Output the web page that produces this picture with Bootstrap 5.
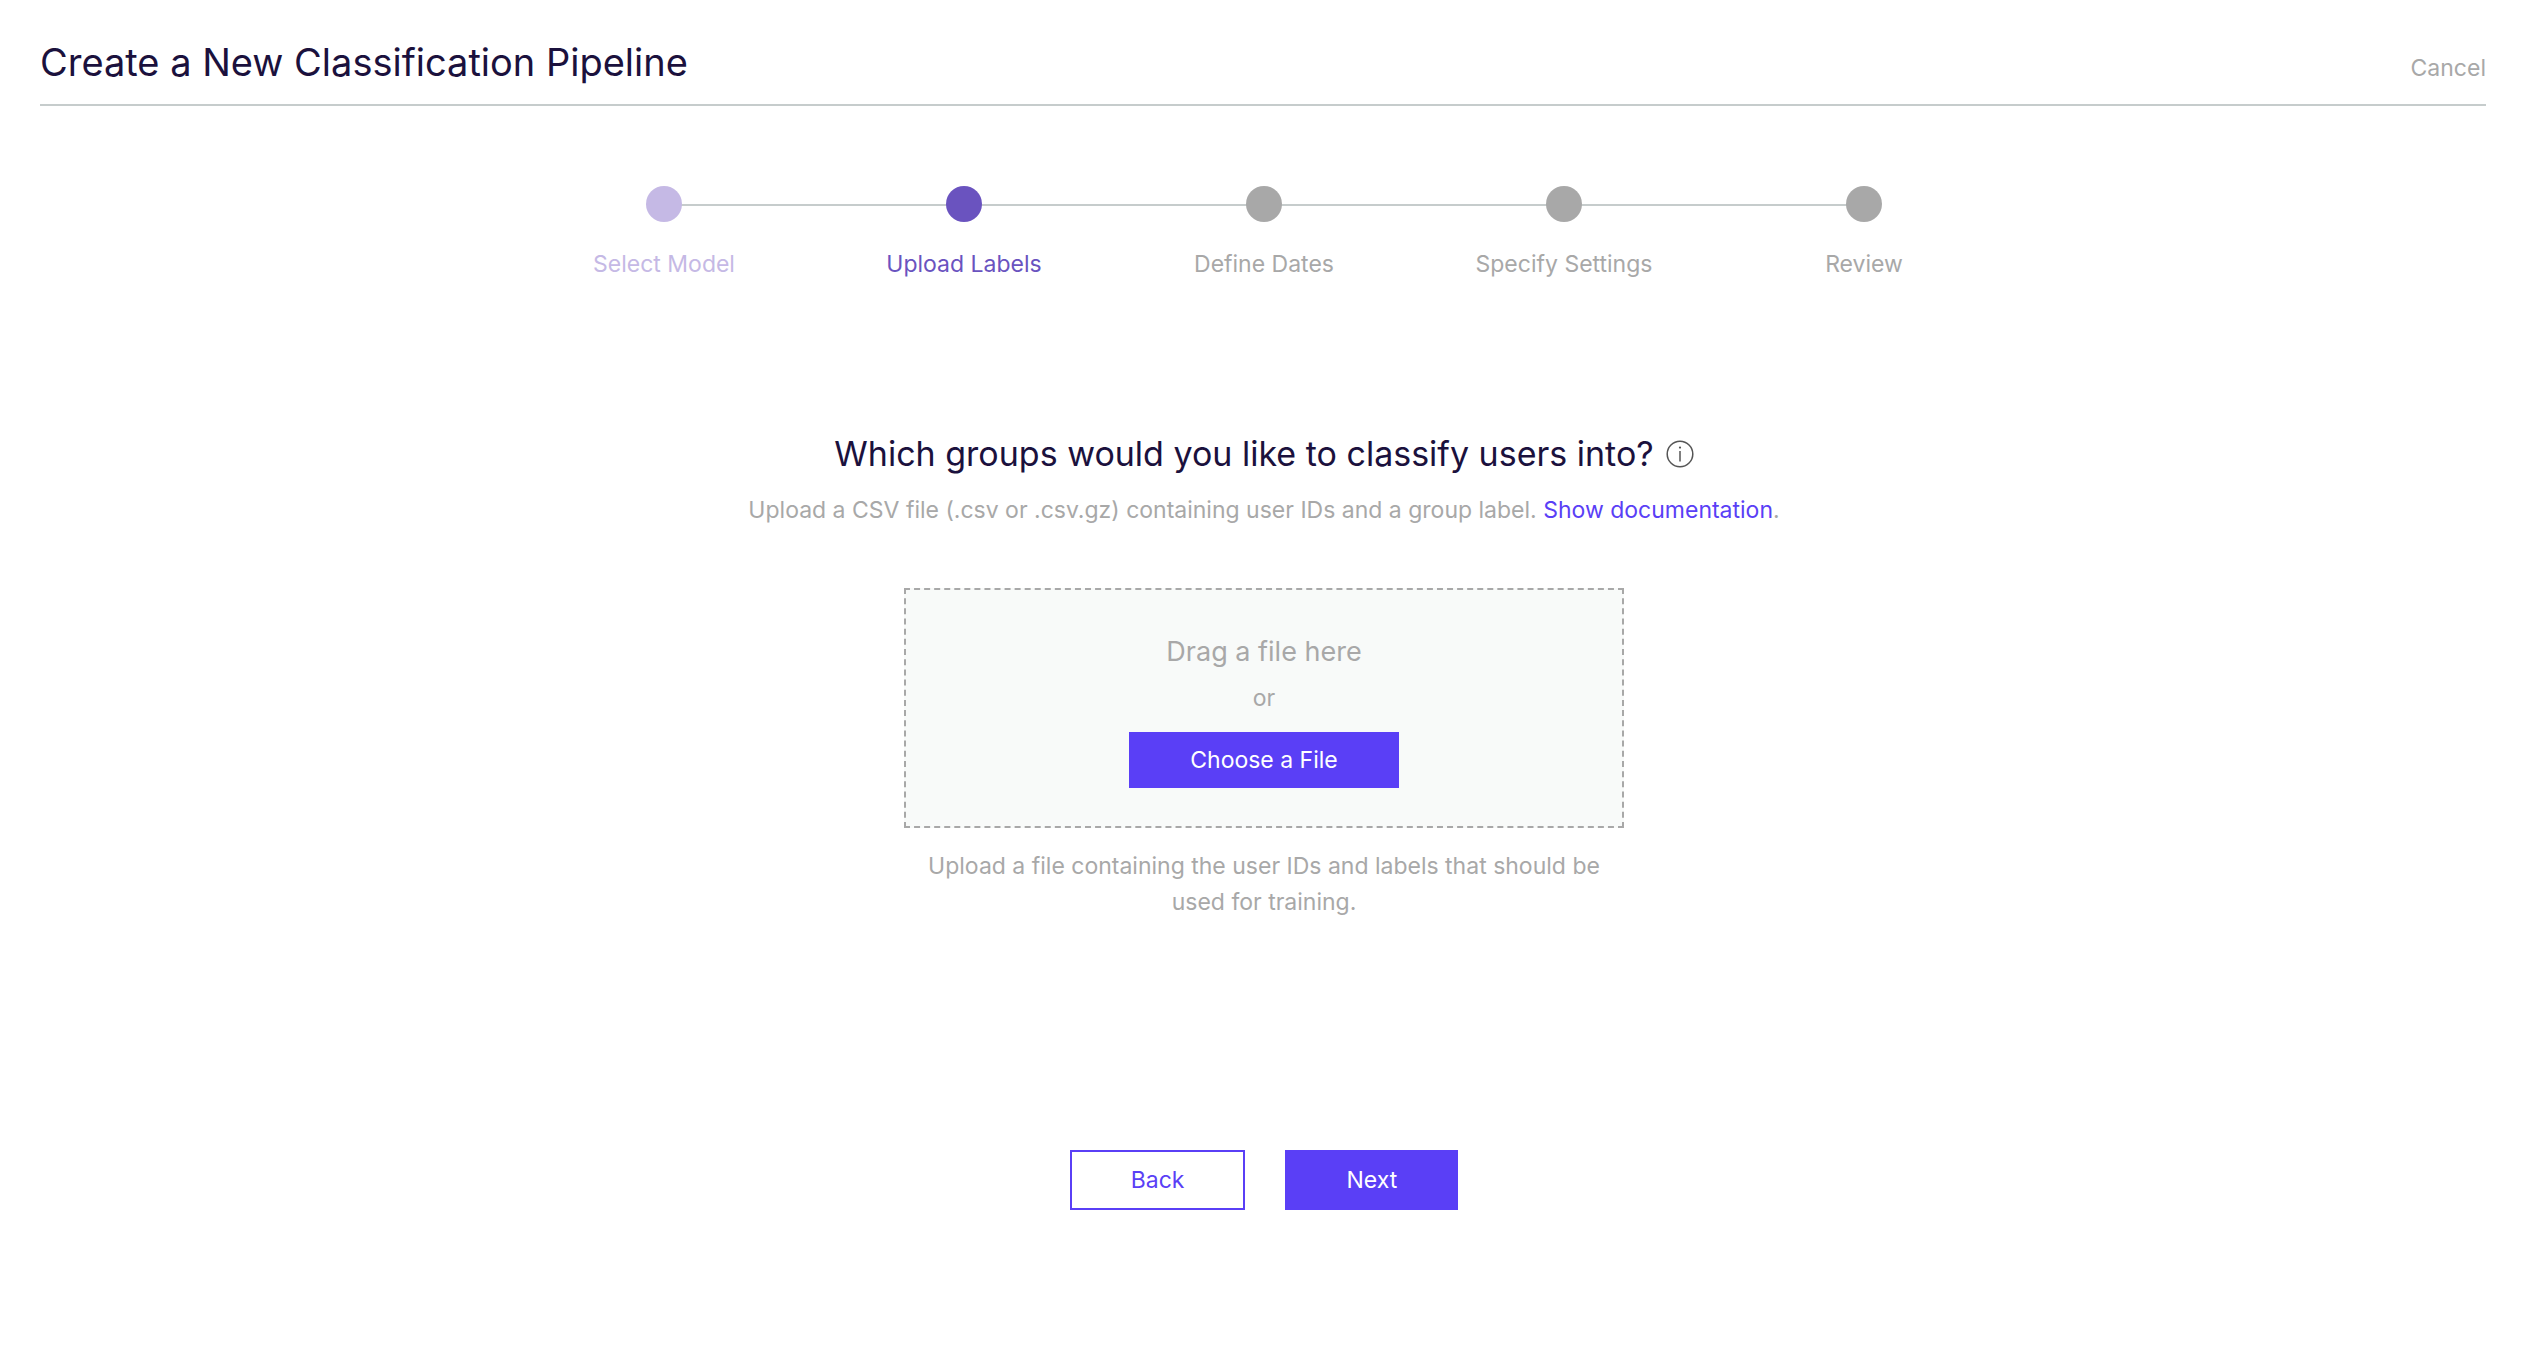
<!DOCTYPE html>
<html lang="en">
<head>
<meta charset="utf-8">
<meta name="viewport" content="width=device-width, initial-scale=1">
<title>Create a New Classification Pipeline</title>
<link href="https://cdn.jsdelivr.net/npm/bootstrap@5.3.0/dist/css/bootstrap.min.css" rel="stylesheet">
<style>
  :root { --ink: #1b113d; --muted: #a8a8a8; --rule: #c6cccc; --brand: #5a3ff6; --step: #6a53bf; --step-done: #c5b9e5; }
  body { font-family: Inter, "Liberation Sans", sans-serif; font-size: 23px; line-height: 36px; color: var(--muted); background: #fff; }
  .page { padding: 36px 38px 40px 40px; }
  .page-head { border-bottom: 2px solid var(--rule); padding-bottom: 16px; }
  .page-head h1 { font-size: 38px; line-height: 52px; font-weight: 400; color: var(--ink); }
  .page-head a { color: var(--muted); }
  main { padding-left: 2px; }
  .steps { max-width: 1500px; margin-top: 80px; }
  .step { position: relative; color: var(--muted); }
  .step + .step::before { content: ""; position: absolute; top: 18px; left: -50%; width: 100%; height: 2px; background: var(--rule); }
  .dot { position: relative; z-index: 1; width: 36px; height: 36px; background: currentColor; }
  .step-label { margin-top: 24px; }
  .step.done { color: var(--step-done); }
  .step.current { color: var(--step); }
  .question { margin-top: 146px; }
  .question h2 { font-size: 34px; line-height: 52px; font-weight: 400; color: var(--ink); }
  .question a { color: var(--brand); }
  .dropzone { max-width: 720px; margin-top: 60px; padding: 42px 0 38px; border: 2px dashed var(--muted); background: #f8faf9; }
  .drop-title { font-size: 27px; line-height: 40px; }
  .hint { max-width: 720px; padding: 0 20px; margin-top: 20px; }
  .btn { --bs-btn-font-size: 23px; --bs-btn-line-height: 36px; --bs-btn-border-width: 2px; --bs-btn-border-radius: 0; --bs-btn-padding-x: 59px; }
  .btn-brand { --bs-btn-color: #fff; --bs-btn-bg: var(--brand); --bs-btn-border-color: var(--brand); --bs-btn-hover-color: #fff; --bs-btn-hover-bg: #4a30e0; --bs-btn-hover-border-color: #4a30e0; }
  .btn-line { --bs-btn-color: var(--brand); --bs-btn-border-color: var(--brand); --bs-btn-hover-color: #fff; --bs-btn-hover-bg: var(--brand); --bs-btn-hover-border-color: var(--brand); }
  .btn-file { --bs-btn-padding-x: 20px; --bs-btn-padding-y: 8px; width: 270px; margin-top: 16px; }
  .btn-nav { --bs-btn-padding-y: 10px; }
  .actions { margin-top: 230px; gap: 40px; }
</style>
</head>
<body>
<div class="page">
  <header class="page-head d-flex justify-content-between align-items-baseline">
    <h1 class="mb-0">Create a New Classification Pipeline</h1>
    <a href="#" class="text-decoration-none">Cancel</a>
  </header>
  <main>
    <ol class="steps list-unstyled d-flex mx-auto mb-0 text-center">
      <li class="step done col"><div class="dot rounded-circle mx-auto"></div><div class="step-label">Select Model</div></li>
      <li class="step current col" aria-current="step"><div class="dot rounded-circle mx-auto"></div><div class="step-label">Upload Labels</div></li>
      <li class="step col"><div class="dot rounded-circle mx-auto"></div><div class="step-label">Define Dates</div></li>
      <li class="step col"><div class="dot rounded-circle mx-auto"></div><div class="step-label">Specify Settings</div></li>
      <li class="step col"><div class="dot rounded-circle mx-auto"></div><div class="step-label">Review</div></li>
    </ol>
    <section class="question text-center">
      <div class="d-flex justify-content-center align-items-center gap-2">
        <h2 class="mb-0">Which groups would you like to classify users into?</h2>
        <svg class="ms-1" width="28" height="28" viewBox="0 0 28 28" fill="none" stroke="#555" role="img" aria-label="More information">
          <circle cx="14" cy="14" r="12.8" stroke-width="1.5"/>
          <path d="M14 11V21.5" stroke-width="1.5"/>
          <circle cx="14" cy="7.6" r="1.1" fill="#555" stroke="none"/>
        </svg>
      </div>
      <p class="mb-0 mt-2 pt-1">Upload a CSV file (.csv or .csv.gz) containing user IDs and a group label. <a href="#" class="text-decoration-none">Show documentation</a>.</p>
      <div class="dropzone mx-auto d-flex flex-column align-items-center">
        <div class="drop-title">Drag a file here</div>
        <div class="mt-2">or</div>
        <button type="button" class="btn btn-brand btn-file">Choose a File</button>
      </div>
      <p class="hint mx-auto mb-0">Upload a file containing the user IDs and labels that should be used for training.</p>
    </section>
    <div class="actions d-flex justify-content-center">
      <button type="button" class="btn btn-line btn-nav">Back</button>
      <button type="button" class="btn btn-brand btn-nav">Next</button>
    </div>
  </main>
</div>
<script src="https://cdn.jsdelivr.net/npm/bootstrap@5.3.0/dist/js/bootstrap.bundle.min.js"></script>
</body>
</html>
